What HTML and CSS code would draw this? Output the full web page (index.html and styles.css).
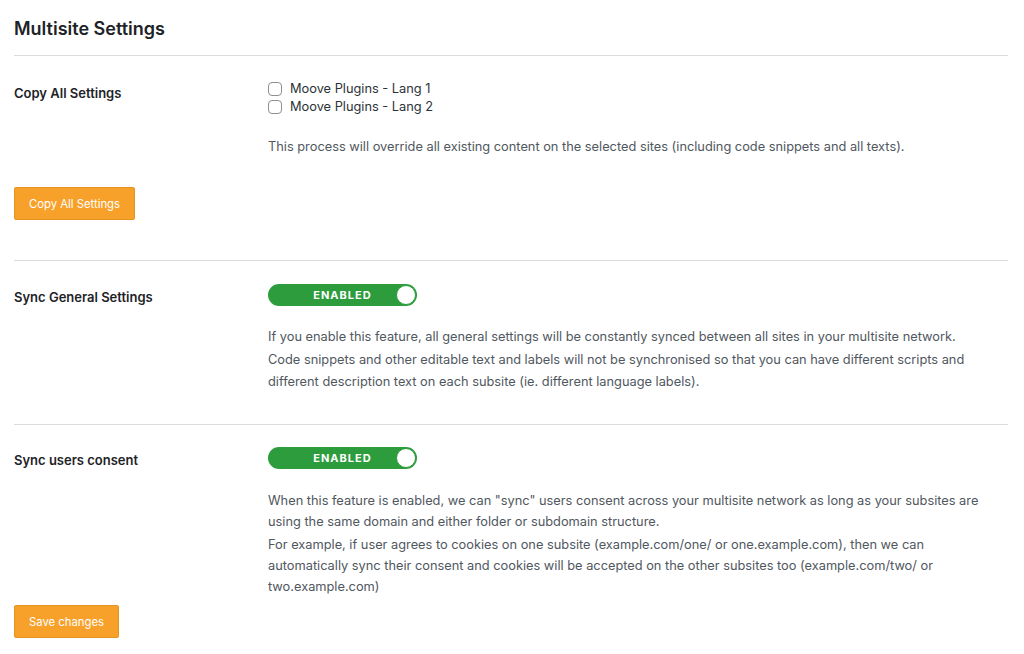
FILE: index.html
```html
<!DOCTYPE html>
<html>
<head>
<meta charset="utf-8">
<link rel="stylesheet" href="styles.css">
</head>
<body>
<div class="page">
  <h1 class="title">Multisite Settings</h1>
  <hr class="sep">
  <section class="row">
    <div class="label">Copy All Settings</div>
    <div class="field">
      <label class="check"><span class="box"></span>Moove Plugins - Lang 1</label>
      <label class="check"><span class="box"></span>Moove Plugins - Lang 2</label>
      <p class="desc first">This process will override all existing content on the selected sites (including code snippets and all texts).</p>
    </div>
  </section>
  <button class="btn btn-copy">Copy All Settings</button>
  <hr class="sep sep2">
  <section class="row row2">
    <div class="label">Sync General Settings</div>
    <div class="field">
      <div class="toggle"><span class="toggle-text">ENABLED</span><span class="knob"></span></div>
      <p class="desc">If you enable this feature, all general settings will be constantly synced between all sites in your multisite network.</p>
      <p class="desc">Code snippets and other editable text and labels will not be synchronised so that you can have different scripts and different description text on each subsite (ie. different language labels).</p>
    </div>
  </section>
  <hr class="sep sep3">
  <section class="row row2 row3">
    <div class="label">Sync users consent</div>
    <div class="field">
      <div class="toggle"><span class="toggle-text">ENABLED</span><span class="knob"></span></div>
      <p class="desc">When this feature is enabled, we can "sync" users consent across your multisite network as long as your subsites are using the same domain and either folder or subdomain structure.</p>
      <p class="desc">For example, if user agrees to cookies on one subsite (example.com/one/ or one.example.com), then we can automatically sync their consent and cookies will be accepted on the other subsites too (example.com/two/ or two.example.com)</p>
    </div>
  </section>
  <button class="btn btn-save">Save changes</button>
</div>
</body>
</html>
```
FILE: styles.css
```css
html, body {
  margin: 0;
  padding: 0;
  background: #fff;
}
body {
  font-family: Inter, "Noto Sans", "Liberation Sans", sans-serif;
  color: #3c434a;
  font-size: 12.8px;
}
.page {
  padding: 0 16px 0 14px;
}
.title {
  margin: 0;
  padding-top: 18px;
  font-size: 18px;
  line-height: 22px;
  font-weight: 600;
  color: #1d2327;
}
.sep {
  border: 0;
  border-top: 1px solid #dcdcde;
  margin: 15px 0 0 0;
}
.row {
  display: grid;
  grid-template-columns: 254px minmax(0, 714px);
  padding-top: 23px;
}
.label {
  font-weight: 600;
  font-size: 13px;
  line-height: 22px;
  color: #1d2327;
  padding-top: 3px;
}
.field {
  display: flex;
  flex-direction: column;
}
.check {
  display: flex;
  align-items: center;
  gap: 8px;
  height: 18px;
  line-height: 18px;
  color: #2c3338;
}
.check:first-child {
  margin-top: 1px;
}
.box {
  width: 14px;
  height: 14px;
  border: 1px solid #8c8f94;
  border-radius: 4px;
  box-sizing: border-box;
  background: #fff;
}
.desc {
  margin: 0;
  line-height: 22px;
  color: #50575e;
}
.desc.first {
  margin-top: 20px;
}
.btn {
  display: block;
  font-family: inherit;
  font-size: 11.3px;
  color: #fff;
  background: #f8a12a;
  border: 1px solid #e59420;
  border-radius: 2px;
  height: 33px;
  padding: 0 14px;
  white-space: nowrap;
  cursor: pointer;
}
.btn-copy {
  margin-top: 29px;
}
.btn-save {
  margin-top: 8px;
}
.sep2 {
  margin-top: 40px;
}
.sep3 {
  margin-top: 31px;
}
.row2 .label {
  padding-top: 2px;
}
.row3 .label {
  padding-top: 1px;
}
.row2 .toggle {
  margin-bottom: 20px;
}
.row2 .desc {
  line-height: 22px;
}
.row2 .desc + .desc {
  margin-top: 1px;
}
.row3 .desc {
  line-height: 21px;
}
.row3 .desc + .desc {
  margin-top: 2px;
}
.row3 .toggle {
  margin-top: -1px;
  margin-bottom: 21px;
}
.toggle {
  position: relative;
  width: 149px;
  height: 22px;
  box-sizing: border-box;
  border-radius: 11px;
  background: #2c9c3c;
  display: flex;
  align-items: center;
  justify-content: center;
}
.toggle-text {
  color: #fff;
  font-weight: 700;
  font-size: 11px;
  letter-spacing: 1px;
}
.knob {
  position: absolute;
  right: 1px;
  top: 1px;
  width: 20px;
  height: 20px;
  border-radius: 50%;
  background: #fff;
  box-sizing: border-box;
  border: 1px solid #2c9c3c;
}
```
